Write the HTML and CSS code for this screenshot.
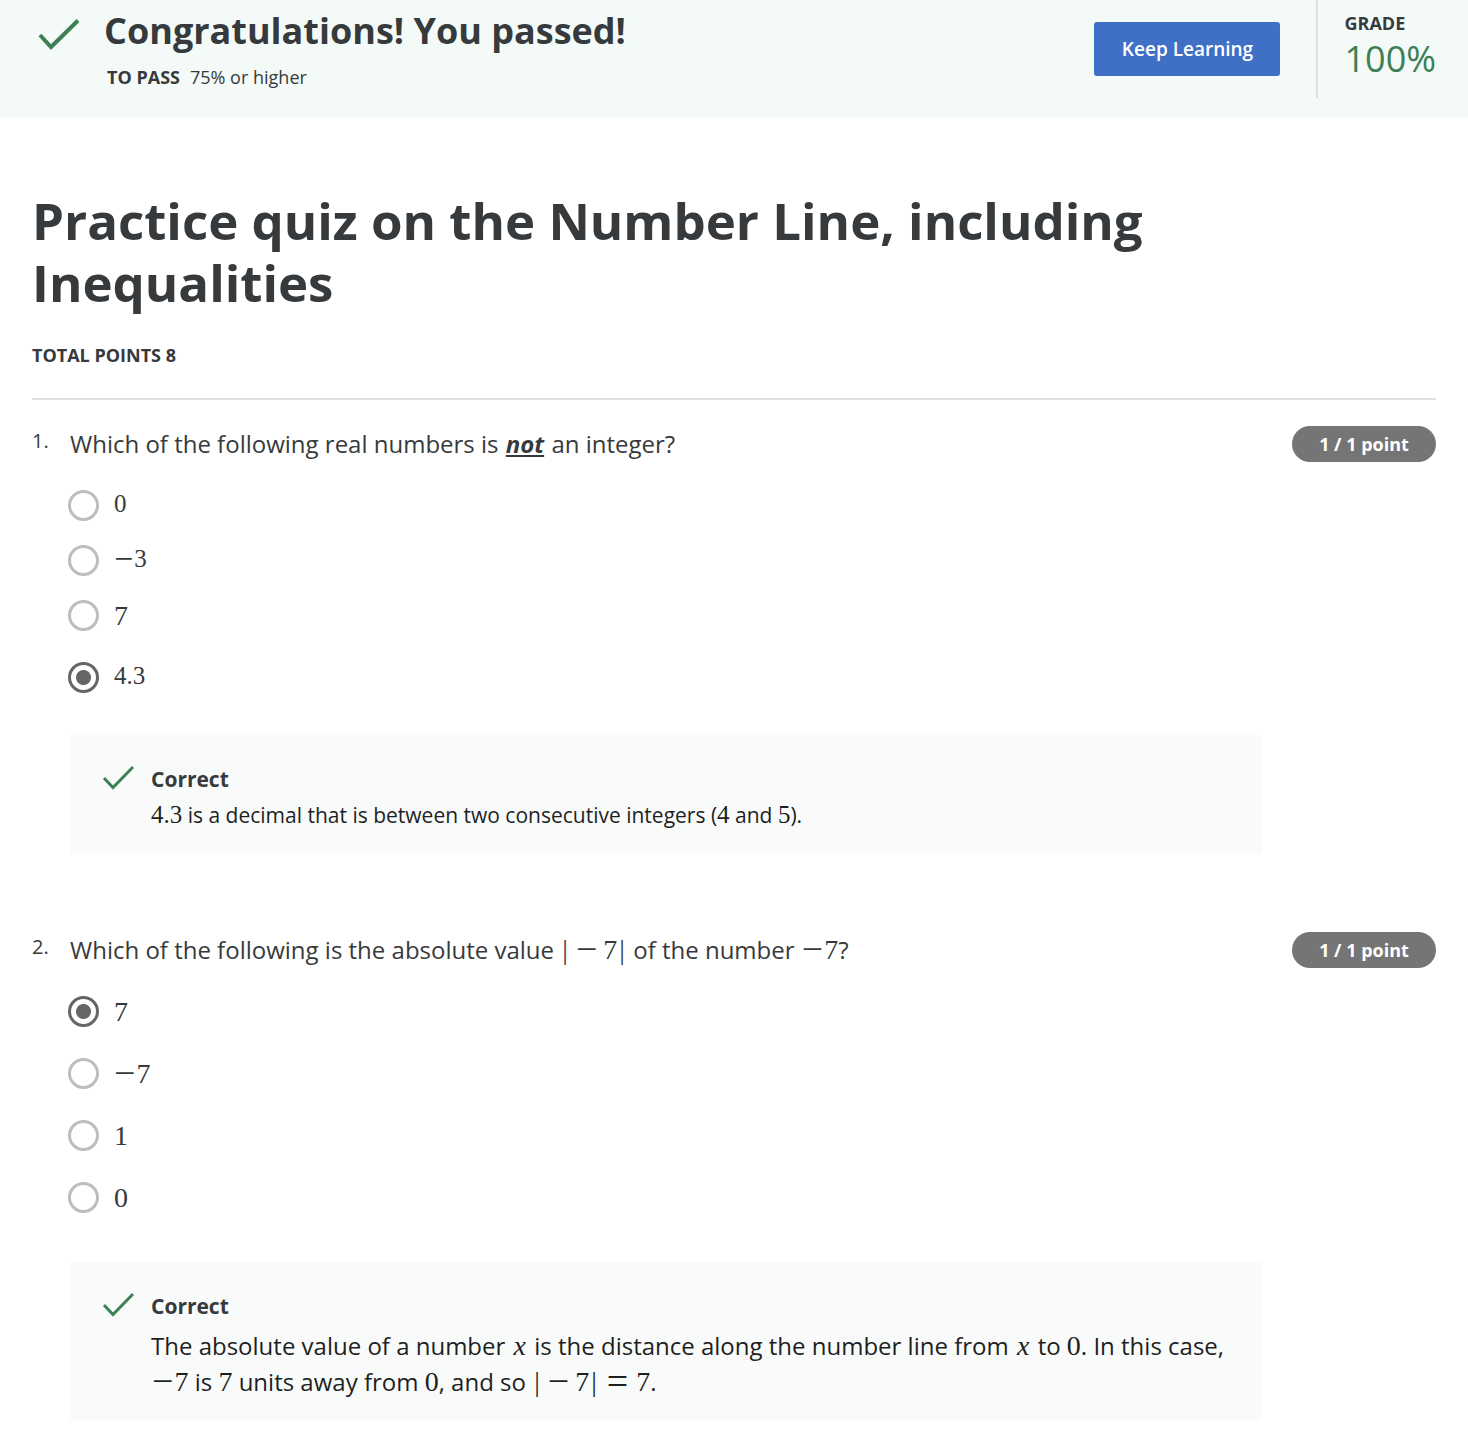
FILE: index.html
```html
<!DOCTYPE html>
<html lang="en">
<head>
<meta charset="utf-8">
<meta name="viewport" content="width=device-width, initial-scale=1">
<title>Practice quiz on the Number Line, including Inequalities</title>
<link rel="stylesheet" href="styles.css">
</head>
<body>
<header class="result">
  <svg class="result-check" viewBox="0 0 42 34" aria-hidden="true"><path d="M2 17L13 29L40 2.500" fill="none" stroke="#3d8055" stroke-width="4"/></svg>
  <div class="result-text">
    <h2 class="result-title">Congratulations! You passed!</h2>
    <p class="result-rule"><strong>TO PASS</strong><span>75% or higher</span></p>
  </div>
  <button class="keep" type="button">Keep Learning</button>
  <div class="grade">
    <div class="grade-label">GRADE</div>
    <div class="grade-value">100%</div>
  </div>
</header>
<main class="quiz">
  <h1 class="quiz-title">Practice quiz on the Number Line, including Inequalities</h1>
  <p class="total">TOTAL POINTS 8</p>

  <section class="question">
    <div class="number">1.</div>
    <div class="body">
      <p class="prompt" id="q1">Which of the following real numbers is <strong class="stress">not</strong> an integer?</p>
      <div class="options" role="radiogroup" aria-labelledby="q1">
        <label class="option compact"><input type="radio" name="q1"><span class="math">0</span></label>
        <label class="option compact"><input type="radio" name="q1"><span class="math"><span class="sign">−</span>3</span></label>
        <label class="option"><input type="radio" name="q1"><span class="math">7</span></label>
        <label class="option compact"><input type="radio" name="q1" checked><span class="math">4.3</span></label>
      </div>
      <div class="feedback">
        <svg class="check" viewBox="0 0 32 26" aria-hidden="true"><path d="M2 13L11 22.500L31 2" fill="none" stroke="#3d8055" stroke-width="3"/></svg>
        <div>
          <h3 class="verdict">Correct</h3>
          <p class="explain brief"><span class="math">4.3</span> is a decimal that is between two consecutive integers (<span class="math">4</span> and <span class="math">5</span>).</p>
        </div>
      </div>
    </div>
    <div class="points">1 / 1 point</div>
  </section>

  <section class="question">
    <div class="number">2.</div>
    <div class="body">
      <p class="prompt" id="q2">Which of the following is the absolute value <span class="math"><span class="bar">|</span><span class="sign spaced">−</span>7<span class="bar">|</span></span> of the number <span class="math"><span class="sign">−</span>7</span>?</p>
      <div class="options" role="radiogroup" aria-labelledby="q2">
        <label class="option"><input type="radio" name="q2" checked><span class="math">7</span></label>
        <label class="option"><input type="radio" name="q2"><span class="math"><span class="sign">−</span>7</span></label>
        <label class="option"><input type="radio" name="q2"><span class="math">1</span></label>
        <label class="option"><input type="radio" name="q2"><span class="math">0</span></label>
      </div>
      <div class="feedback">
        <svg class="check" viewBox="0 0 32 26" aria-hidden="true"><path d="M2 13L11 22.500L31 2" fill="none" stroke="#3d8055" stroke-width="3"/></svg>
        <div>
          <h3 class="verdict">Correct</h3>
          <p class="explain">The absolute value of a number <i class="math variable">x</i> is the distance along the number line from <i class="math variable">x</i> to <span class="math">0</span>. In this case, <span class="math"><span class="sign">−</span>7</span> is <span class="math">7</span> units away from <span class="math">0</span>, and so <span class="math"><span class="bar">|</span><span class="sign spaced">−</span>7<span class="bar">|</span><span class="sign equals">=</span>7</span>.</p>
        </div>
      </div>
    </div>
    <div class="points">1 / 1 point</div>
  </section>
</main>
</body>
</html>
```

FILE: styles.css
```css
* {
  box-sizing: border-box;
}

body {
  margin: 0;
  background: #fff;
  color: #373a3c;
  font-family: "Open Sans", sans-serif;
}

h1, h2, h3, p {
  margin: 0;
}

.result {
  display: flex;
  align-items: flex-start;
  padding: 0 32px 20px 38px;
  background: #f4faf8;
}

.result-check {
  flex: none;
  width: 42px;
  height: 34px;
  margin: 18px 24px 0 0;
}

.result-text {
  flex: 1;
  padding-top: 6px;
}

.result-title {
  font-size: 36px;
  line-height: 50px;
}

.result-rule {
  display: flex;
  gap: 10px;
  padding: 8px 0 0 3px;
  font-size: 18px;
  line-height: 26px;
}

.keep {
  margin: 22px 36px 0 24px;
  padding: 0 26px;
  min-width: 186px;
  height: 54px;
  border: 0;
  border-radius: 3px;
  background: #3f70c6;
  color: #fff;
  font: 600 19px "Open Sans", sans-serif;
}

.grade {
  height: 98px;
  padding: 10px 0 0 26px;
  border-left: 2px solid #dedfdf;
}

.grade-label {
  font-size: 18px;
  font-weight: 700;
  line-height: 26px;
}

.grade-value {
  color: #3d8055;
  font-size: 36px;
  line-height: 46px;
}

.quiz {
  padding: 71px 32px 20px;
}

.quiz-title {
  max-width: 1200px;
  font-size: 51px;
  line-height: 62px;
}

.total {
  padding: 29px 0 30px;
  border-bottom: 2px solid #dedfdf;
  font-size: 18px;
  font-weight: 700;
  line-height: 26px;
}

.question {
  display: grid;
  grid-template-columns: 38px minmax(0, 1192px) 1fr;
  padding-top: 26px;
}

.question + .question {
  padding-top: 79px;
}

.number {
  padding-top: 2px;
  font-size: 20px;
  line-height: 26px;
}

.prompt {
  font-size: 24px;
  line-height: 36px;
}

.stress {
  margin: 0 1px;
  font-style: italic;
  text-decoration: underline;
}

.math {
  font-family: "Liberation Serif", serif;
  font-size: 28px;
  line-height: 30px;
}

.bar {
  margin: 0 2px;
}

.sign {
  margin: 0 1px;
  font-size: 38px;
  line-height: 0;
  vertical-align: -3px;
}

.spaced {
  margin: 0 6px;
}

.equals {
  margin: 0 8px;
}

.variable {
  margin: 0 2px;
}

.options {
  padding-top: 28px;
}

.option {
  display: flex;
  align-items: flex-start;
  gap: 15px;
  width: fit-content;
  height: 62px;
  margin-left: -2px;
}

.option .math {
  line-height: 32px;
}

.compact {
  height: 55px;
}

.compact .math {
  font-size: 25px;
  line-height: 28px;
}

.compact .sign {
  font-size: 34px;
}

.option .sign {
  margin-left: 0;
  line-height: 0;
}

.option input {
  appearance: none;
  flex: none;
  width: 31px;
  height: 31px;
  margin: 0;
  border: 3px solid #bdbdbd;
  border-radius: 50%;
}

.option input:checked {
  border-color: #666;
  background: radial-gradient(circle, #666 7px, transparent 8px);
}

.feedback {
  display: flex;
  gap: 17px;
  margin-top: 18px;
  padding: 26px 32px 20px;
  background: #f8fbfa;
}

.check {
  flex: none;
  width: 32px;
  height: 26px;
  margin-top: 4px;
}

.verdict {
  font-size: 21px;
  line-height: 36px;
}

.explain {
  padding-top: 4px;
  color: #1f1f1f;
  font-size: 24px;
  line-height: 36px;
}

.brief {
  padding-top: 0;
  font-size: 21px;
}

.brief .math {
  font-size: 25px;
}

.points {
  justify-self: end;
  width: 144px;
  height: 36px;
  border-radius: 18px;
  background: #757575;
  color: #fff;
  font-size: 18px;
  font-weight: 700;
  line-height: 36px;
  text-align: center;
}
```
